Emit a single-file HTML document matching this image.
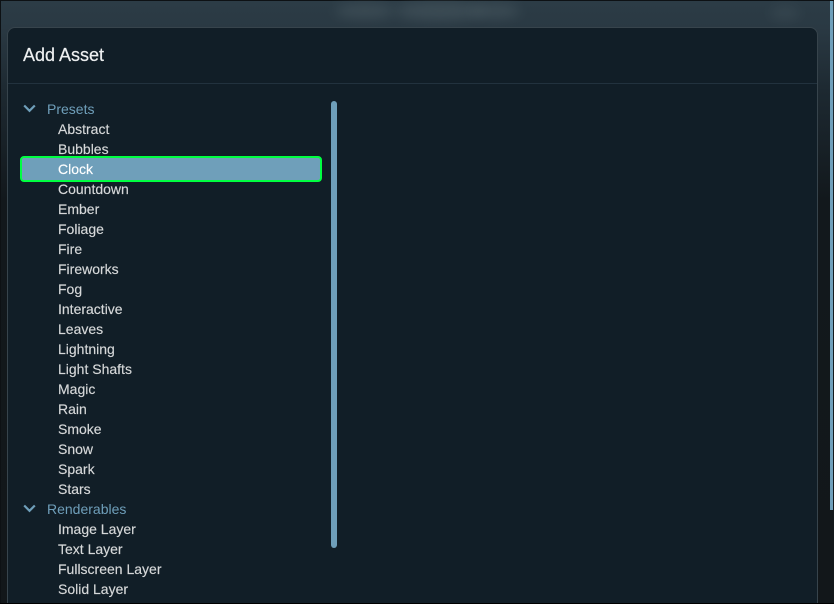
<!DOCTYPE html>
<html><head><meta charset="utf-8"><style>
*{box-sizing:border-box}
html,body{margin:0;padding:0;width:834px;height:604px;overflow:hidden;background:#111;font-family:"Liberation Sans",sans-serif}
#wrap{position:absolute;left:0;top:0;width:834px;height:604px;overflow:hidden;background:#0d1114}
#bg{position:absolute;left:1px;top:1px;width:833px;height:602px;background:linear-gradient(180deg,#2c3c46 0,#2a3943 27px,#1d2931 90px,#12181c 200px,#12171a 100%)}
.blob{position:absolute;border-radius:50%;background:#4a5a62;filter:blur(6px);opacity:.55}
#bar{position:absolute;left:830px;top:1px;width:3px;height:509px;background:#6f9fba}
#panel{position:absolute;left:7px;top:27px;width:811px;height:590px;background:#111e27;border:1px solid #37444c;border-radius:8px}
#title{position:absolute;left:23px;top:44px;font-size:18px;line-height:22px;color:#eef0f1;-webkit-text-stroke:.2px #eef0f1}
#div{position:absolute;left:8px;top:83px;width:809px;height:1px;background:#22323e}
.i{position:absolute;left:58px;font-size:14px;line-height:20px;color:#d6d8d9;white-space:nowrap;-webkit-text-stroke:.15px #d6d8d9}
.h{position:absolute;left:47px;font-size:14px;line-height:20px;color:#6f9fba;white-space:nowrap}
#sel{position:absolute;left:20px;top:156px;width:302px;height:26px;background:#6f9fba;border:2.5px solid #00ff41;border-radius:4px}
#sb{position:absolute;left:331px;top:101px;width:6px;height:447px;background:#6f9fba;border-radius:3px}
svg{position:absolute;left:23px}
#bot{position:absolute;left:0;top:603px;width:834px;height:1px;background:#000}
</style></head><body>
<div id="wrap">
<div id="bg"></div>
<div class="blob" style="left:335px;top:4px;width:60px;height:14px"></div>
<div class="blob" style="left:395px;top:2px;width:90px;height:18px"></div>
<div class="blob" style="left:470px;top:4px;width:50px;height:14px"></div>
<div class="blob" style="left:770px;top:6px;width:30px;height:14px;opacity:.35"></div>
<div id="bar"></div>
<div id="panel"></div>
<div id="title">Add Asset</div>
<div id="div"></div>
<svg style="top:104px" width="13" height="9" viewBox="0 0 13 9"><path d="M1.2 1.5 L6.5 6.8 L11.8 1.5" fill="none" stroke="#6f9fba" stroke-width="2.2"/></svg>
<div class="h" style="top:99px">Presets</div>
<div id="sel"></div>
<div class="i" style="top:119px">Abstract</div>
<div class="i" style="top:139px">Bubbles</div>
<div class="i" style="top:159px;color:#fff;-webkit-text-stroke:.15px #fff">Clock</div>
<div class="i" style="top:179px">Countdown</div>
<div class="i" style="top:199px">Ember</div>
<div class="i" style="top:219px">Foliage</div>
<div class="i" style="top:239px">Fire</div>
<div class="i" style="top:259px">Fireworks</div>
<div class="i" style="top:279px">Fog</div>
<div class="i" style="top:299px">Interactive</div>
<div class="i" style="top:319px">Leaves</div>
<div class="i" style="top:339px">Lightning</div>
<div class="i" style="top:359px">Light Shafts</div>
<div class="i" style="top:379px">Magic</div>
<div class="i" style="top:399px">Rain</div>
<div class="i" style="top:419px">Smoke</div>
<div class="i" style="top:439px">Snow</div>
<div class="i" style="top:459px">Spark</div>
<div class="i" style="top:479px">Stars</div>
<svg style="top:504px" width="13" height="9" viewBox="0 0 13 9"><path d="M1.2 1.5 L6.5 6.8 L11.8 1.5" fill="none" stroke="#6f9fba" stroke-width="2.2"/></svg>
<div class="h" style="top:499px">Renderables</div>
<div class="i" style="top:519px">Image Layer</div>
<div class="i" style="top:539px">Text Layer</div>
<div class="i" style="top:559px">Fullscreen Layer</div>
<div class="i" style="top:579px">Solid Layer</div>
<div id="sb"></div>
<div id="bot"></div>
</div>
</body></html>
